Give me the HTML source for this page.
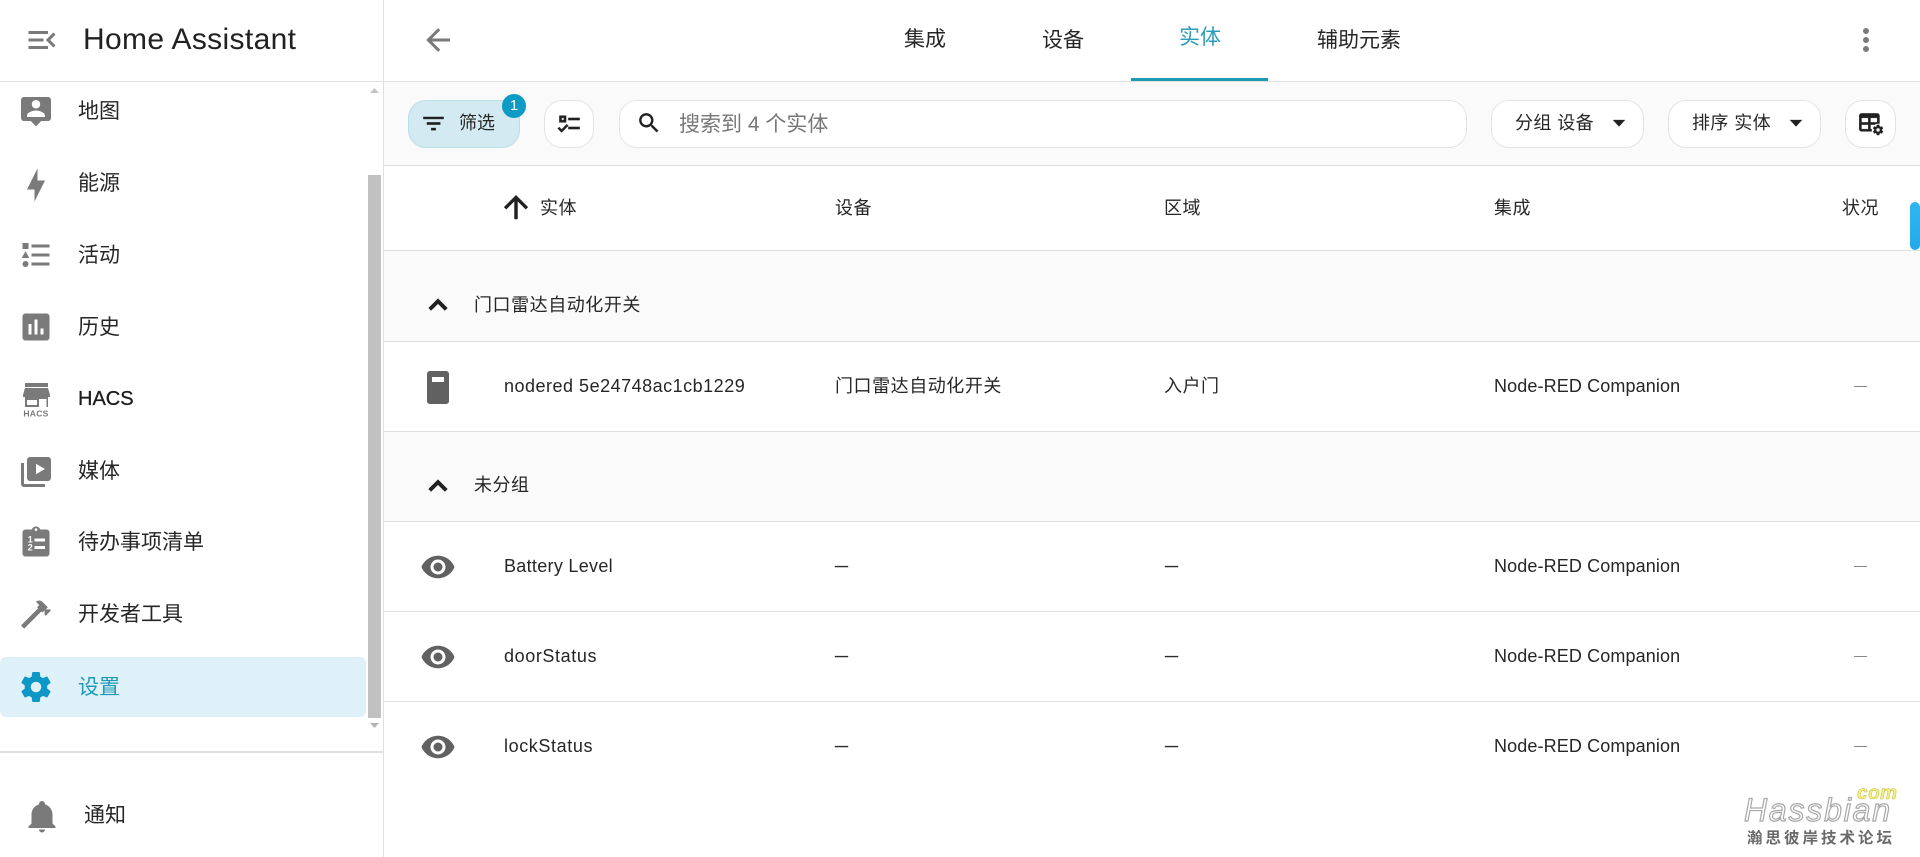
<!DOCTYPE html>
<html lang="zh"><head><meta charset="utf-8"><title>Home Assistant</title>
<style>
html,body{margin:0;padding:0;width:1920px;height:857px;overflow:hidden;background:#fff}
body{position:relative;font-family:"Liberation Sans","Noto Sans CJK SC",sans-serif;color:#262626}
.t,.l,.b,svg.i{position:absolute}
.t{white-space:nowrap;line-height:30px;height:30px}
.s{font-size:21px}
.c{font-size:18px;letter-spacing:.5px}
.n{letter-spacing:.12px}
.b{box-sizing:border-box;background:#fff;border:1px solid #e4e4e4;border-radius:18px;top:100px;height:48px}
.l{background:#e0e0e0}
svg.i{fill:#7a7a7a;overflow:visible}
svg.d{fill:#616161}
svg.k{fill:#212121;stroke:#212121;stroke-width:.3}
.e{font-size:13px;letter-spacing:0;-webkit-text-stroke:.4px #262626}
.g{font-size:13px;letter-spacing:0;color:#777}
</style></head><body>

<!-- main backgrounds -->
<div class="l" style="left:384px;top:82px;width:1536px;height:84px;background:#fafafa"></div>
<div class="l" style="left:384px;top:250px;width:1536px;height:91px;background:#fafafa"></div>
<div class="l" style="left:384px;top:431px;width:1536px;height:90px;background:#fafafa"></div>

<!-- lines -->
<div class="l" style="left:0;top:81px;width:1920px;height:1px"></div>
<div class="l" style="left:383px;top:0;width:1px;height:857px"></div>
<div class="l" style="left:384px;top:165px;width:1536px;height:1px"></div>
<div class="l" style="left:384px;top:250px;width:1536px;height:1px"></div>
<div class="l" style="left:384px;top:341px;width:1536px;height:1px"></div>
<div class="l" style="left:384px;top:431px;width:1536px;height:1px"></div>
<div class="l" style="left:384px;top:521px;width:1536px;height:1px"></div>
<div class="l" style="left:384px;top:611px;width:1536px;height:1px"></div>
<div class="l" style="left:384px;top:701px;width:1536px;height:1px"></div>
<div class="l" style="left:0;top:751px;width:383px;height:2px"></div>

<!-- sidebar header -->
<svg class="i" style="left:24px;top:22px" width="36" height="36" viewBox="0 0 24 24"><path d="M21,15.61L19.59,17L14.58,12L19.59,7L21,8.39L17.44,12L21,15.61M3,6H16V8H3V6M3,13V11H13V13H3M3,18V16H16V18H3Z"/></svg>
<div class="t" style="left:83px;top:25px;font-size:30px;letter-spacing:.35px;color:#212121">Home Assistant</div>

<!-- sidebar scrollbar -->
<div class="l" style="left:368px;top:175px;width:13px;height:543px;background:#c1c1c1"></div>
<svg class="i" style="left:370px;top:88px;fill:#c4c4c4" width="9" height="6" viewBox="0 0 9 6"><path d="M4.5 0L9 5H0Z"/></svg>
<svg class="i" style="left:370px;top:723px;fill:#b5b5b5" width="9" height="6" viewBox="0 0 9 6"><path d="M4.5 5L0 0H9Z"/></svg>

<!-- selected -->
<div class="l" style="left:0;top:657px;width:366px;height:60px;background:#dff1f8;border-radius:6px"></div>

<!-- sidebar items -->
<svg class="i" style="left:18px;top:94px" width="36" height="36" viewBox="0 0 24 24"><path fill-rule="evenodd" d="M20 2H4C2.9 2 2 2.9 2 4V16C2 17.1 2.9 18 4 18H8.5L12 21.5L15.5 18H20C21.1 18 22 17.1 22 16V4C22 2.9 21.1 2 20 2ZM12 4C13.6 4 14.8 5.2 14.8 6.8C14.8 8.4 13.6 9.6 12 9.6C10.4 9.6 9.2 8.4 9.2 6.8C9.2 5.2 10.4 4 12 4ZM18 15.3H6V14.3C6 12.3 10 11 12 11C14 11 18 12.3 18 14.3Z"/></svg>
<div class="t s" style="left:78px;top:97px">地图</div>

<svg class="i" style="left:18px;top:167px" width="36" height="36" viewBox="0 0 24 24"><path d="M11 15H6L13 1V9H18L11 23V15Z"/></svg>
<div class="t s" style="left:78px;top:169px">能源</div>

<svg class="i" style="left:18px;top:237px" width="36" height="36" viewBox="0 0 24 24"><path d="M5,9.5L7.5,14H2.5L5,9.5M3,4H7V8H3V4M5,20A2,2 0 0,0 7,18A2,2 0 0,0 5,16A2,2 0 0,0 3,18A2,2 0 0,0 5,20M9,5V7H21V5H9M9,19H21V17H9V19M9,13H21V11H9V13Z"/></svg>
<div class="t s" style="left:78px;top:241px">活动</div>

<svg class="i" style="left:18px;top:309px" width="36" height="36" viewBox="0 0 24 24"><path fill-rule="evenodd" d="M19 3H5C3.9 3 3 3.9 3 5V19C3 20.1 3.9 21 5 21H19C20.1 21 21 20.1 21 19V5C21 3.9 20.1 3 19 3ZM9 17H7V10H9V17ZM13 17H11V7H13V17ZM17 17H15V13H17V17Z"/></svg>
<div class="t s" style="left:78px;top:313px">历史</div>

<svg class="i" style="left:22px;top:382px" width="28" height="36" viewBox="0 0 28 36"><path d="M3 1H26V5H3ZM3 6H26L28 13V15H1V13Z" /><path fill-rule="evenodd" d="M3 15H26V25H24.5V17H17V25H3ZM5 18V23H15V18Z"/><text x="14" y="34.5" text-anchor="middle" font-family="Liberation Sans" font-size="8.5" font-weight="700" letter-spacing=".3">HACS</text></svg>
<div class="t" style="left:78px;top:384px;font-size:20px;color:#1c1c1c;-webkit-text-stroke:.3px #1c1c1c">HACS</div>

<svg class="i" style="left:18px;top:454px" width="36" height="36" viewBox="0 0 24 24"><path fill-rule="evenodd" d="M4,6H2V20A2,2 0 0,0 4,22H18V20H4V6ZM22,4V16A2,2 0 0,1 20,18H8A2,2 0 0,1 6,16V4A2,2 0 0,1 8,2H20A2,2 0 0,1 22,4ZM12,6.5V13.5L18,10Z"/></svg>
<div class="t s" style="left:78px;top:457px">媒体</div>

<svg class="i" style="left:18px;top:525px" width="36" height="36" viewBox="0 0 24 24"><path fill-rule="evenodd" d="M19 3H14.82C14.4 1.84 13.3 1 12 1S9.6 1.84 9.18 3H5C3.9 3 3 3.9 3 5V19C3 20.1 3.9 21 5 21H19C20.1 21 21 20.1 21 19V5C21 3.9 20.1 3 19 3ZM12 2.2A.9 .9 0 1 1 12 4A.9 .9 0 1 1 12 2.2ZM11 9H18V11H11ZM11 14H18V16H11Z"/><text x="8.2" y="11.6" text-anchor="middle" font-family="Liberation Sans" font-size="6" font-weight="700" fill="#fff">1</text><text x="8.2" y="17" text-anchor="middle" font-family="Liberation Sans" font-size="6" font-weight="700" fill="#fff">2</text></svg>
<div class="t s" style="left:78px;top:528px">待办事项清单</div>

<svg class="i" style="left:18px;top:596px" width="36" height="36" viewBox="0 0 24 24"><path d="M2 19.63L13.43 8.2L12.72 7.5L14.14 6.07L12 3.89C13.2 2.7 15.09 2.7 16.27 3.89L19.87 7.5L18.45 8.91H21.29L22 9.62L18.45 13.21L17.74 12.5V9.62L16.27 11.04L15.56 10.33L4.13 21.76L2 19.63Z"/></svg>
<div class="t s" style="left:78px;top:600px">开发者工具</div>

<svg class="i" style="left:18px;top:669px;fill:#0d97c6" width="36" height="36" viewBox="0 0 24 24"><path d="M12,15.5A3.5,3.5 0 0,1 8.5,12A3.5,3.5 0 0,1 12,8.5A3.5,3.5 0 0,1 15.5,12A3.5,3.5 0 0,1 12,15.5M19.43,12.97C19.47,12.65 19.5,12.33 19.5,12C19.5,11.67 19.47,11.34 19.43,11L21.54,9.37C21.73,9.22 21.78,8.95 21.66,8.73L19.66,5.27C19.54,5.05 19.27,4.96 19.05,5.05L16.56,6.05C16.04,5.66 15.5,5.32 14.87,5.07L14.5,2.42C14.46,2.18 14.25,2 14,2H10C9.75,2 9.54,2.18 9.5,2.42L9.13,5.07C8.5,5.32 7.96,5.66 7.44,6.05L4.95,5.05C4.73,4.96 4.46,5.05 4.34,5.27L2.34,8.73C2.21,8.95 2.27,9.22 2.46,9.37L4.57,11C4.53,11.34 4.5,11.67 4.5,12C4.5,12.33 4.53,12.65 4.57,12.97L2.46,14.63C2.27,14.78 2.21,15.05 2.34,15.27L4.34,18.73C4.46,18.95 4.73,19.03 4.95,18.95L7.44,17.94C7.96,18.34 8.5,18.68 9.13,18.93L9.5,21.58C9.54,21.82 9.75,22 10,22H14C14.25,22 14.46,21.82 14.5,21.58L14.87,18.93C15.5,18.67 16.04,18.34 16.56,17.94L19.05,18.95C19.27,19.03 19.54,18.95 19.66,18.73L21.66,15.27C21.78,15.05 21.73,14.78 21.54,14.63L19.43,12.97Z"/></svg>
<div class="t s" style="left:78px;top:673px;color:#1e9ab8">设置</div>

<svg class="i" style="left:24px;top:798px" width="36" height="36" viewBox="0 0 24 24"><path d="M21,19V20H3V19L5,17V11C5,7.9 7.03,5.17 10,4.29C10,4.19 10,4.1 10,4A2,2 0 0,1 12,2A2,2 0 0,1 14,4C14,4.1 14,4.19 14,4.29C16.97,5.17 19,7.9 19,11V17L21,19M14,21A2,2 0 0,1 12,23A2,2 0 0,1 10,21"/></svg>
<div class="t s" style="left:84px;top:801px">通知</div>

<!-- top bar -->
<svg class="i" style="left:420px;top:22px" width="36" height="36" viewBox="0 0 24 24"><path d="M20,11V13H8L13.5,18.5L12.08,19.92L4.16,12L12.08,4.08L13.5,5.5L8,11H20Z"/></svg>
<div class="t s" style="left:904px;top:25px">集成</div>
<div class="t s" style="left:1042px;top:26px">设备</div>
<div class="t s" style="left:1179px;top:23px;color:#2a9db8">实体</div>
<div class="t s" style="left:1317px;top:26px">辅助元素</div>
<div class="l" style="left:1131px;top:78px;width:137px;height:3px;background:#1e9ab5"></div>
<svg class="i" style="left:1848px;top:22px" width="36" height="36" viewBox="0 0 24 24"><path d="M12,16A2,2 0 0,1 14,18A2,2 0 0,1 12,20A2,2 0 0,1 10,18A2,2 0 0,1 12,16M12,10A2,2 0 0,1 14,12A2,2 0 0,1 12,14A2,2 0 0,1 10,12A2,2 0 0,1 12,10M12,4A2,2 0 0,1 14,6A2,2 0 0,1 12,8A2,2 0 0,1 10,6A2,2 0 0,1 12,4Z"/></svg>

<!-- toolbar -->
<div class="b" style="left:408px;width:112px;background:#d3eaf2;border-color:#bcdde8"></div>
<svg class="i k" style="left:420px;top:109.5px" width="27" height="27" viewBox="0 0 24 24"><path d="M6,13H18V11H6M3,6V8H21V6M10,18H14V16H10V18Z"/></svg>
<div class="t" style="left:459px;top:108px;font-size:18px">筛选</div>
<div class="l" style="left:502px;top:94px;width:24px;height:24px;border-radius:50%;background:#0d9bc6;color:#fff;font-size:15px;line-height:24px;text-align:center">1</div>

<div class="b" style="left:544px;width:50px"></div>
<svg class="i k" style="left:555.5px;top:109.5px" width="27" height="27" viewBox="0 0 24 24"><path d="M3,5H9V11H3V5M5,7V9H7V7H5M11,7H21V9H11V7M11,15H21V17H11V15M5,20L1.5,16.5L2.91,15.09L5,17.17L9.59,12.59L11,14L5,20Z"/></svg>

<div class="b" style="left:619px;width:848px"></div>
<svg class="i k" style="left:636px;top:110px" width="26" height="26" viewBox="0 0 24 24"><path d="M9.5,3A6.5,6.5 0 0,1 16,9.5C16,11.11 15.41,12.59 14.44,13.73L14.71,14H15.5L20.5,19L19,20.5L14,15.5V14.71L13.73,14.44C12.59,15.41 11.11,16 9.5,16A6.5,6.5 0 0,1 3,9.5A6.5,6.5 0 0,1 9.5,3M9.5,5C7,5 5,7 5,9.5C5,12 7,14 9.5,14C12,14 14,12 14,9.5C14,7 12,5 9.5,5Z"/></svg>
<div class="t" style="left:679px;top:110px;font-size:21px;color:#777">搜索到 4 个实体</div>

<div class="b" style="left:1491px;width:153px"></div>
<div class="t" style="left:1515px;top:108px;font-size:18px;letter-spacing:.4px">分组 设备</div>
<svg class="i k" style="left:1613px;top:120px" width="12" height="7" viewBox="0 0 12 7"><path d="M0 0H12L6 6.5Z"/></svg>

<div class="b" style="left:1668px;width:153px"></div>
<div class="t" style="left:1692px;top:108px;font-size:18px;letter-spacing:.4px">排序 实体</div>
<svg class="i k" style="left:1790px;top:120px" width="12" height="7" viewBox="0 0 12 7"><path d="M0 0H12L6 6.5Z"/></svg>

<div class="b" style="left:1845px;width:51px"></div>
<svg class="i k" style="left:1856.5px;top:109.5px" width="27" height="27" viewBox="0 0 24 24"><path fill-rule="evenodd" d="M4 3H18C19.1 3 20 3.9 20 5V12.08C18.45 11.82 16.92 12.18 15.68 13H12V17H13.08C12.97 17.68 12.97 18.35 13.08 19H4C2.9 19 2 18.1 2 17V5C2 3.9 2.9 3 4 3ZM4 7V11H10V7H4ZM12 7V11H18V7H12ZM4 13V17H10V13H4Z"/><path transform="translate(13.2,12.2) scale(.46)" d="M12,15.5A3.5,3.5 0 0,1 8.5,12A3.5,3.5 0 0,1 12,8.5A3.5,3.5 0 0,1 15.5,12A3.5,3.5 0 0,1 12,15.5M19.43,12.97C19.47,12.65 19.5,12.33 19.5,12C19.5,11.67 19.47,11.34 19.43,11L21.54,9.37C21.73,9.22 21.78,8.95 21.66,8.73L19.66,5.27C19.54,5.05 19.27,4.96 19.05,5.05L16.56,6.05C16.04,5.66 15.5,5.32 14.87,5.07L14.5,2.42C14.46,2.18 14.25,2 14,2H10C9.75,2 9.54,2.18 9.5,2.42L9.13,5.07C8.5,5.32 7.96,5.66 7.44,6.05L4.95,5.05C4.73,4.96 4.46,5.05 4.34,5.27L2.34,8.73C2.21,8.95 2.27,9.22 2.46,9.37L4.57,11C4.53,11.34 4.5,11.67 4.5,12C4.5,12.33 4.53,12.65 4.57,12.97L2.46,14.63C2.27,14.78 2.21,15.05 2.34,15.27L4.34,18.73C4.46,18.95 4.73,19.03 4.95,18.95L7.44,17.94C7.96,18.34 8.5,18.68 9.13,18.93L9.5,21.58C9.54,21.82 9.75,22 10,22H14C14.25,22 14.46,21.82 14.5,21.58L14.87,18.93C15.5,18.67 16.04,18.34 16.56,17.94L19.05,18.95C19.27,19.03 19.54,18.95 19.66,18.73L21.66,15.27C21.78,15.05 21.73,14.78 21.54,14.63L19.43,12.97Z"/></svg>

<!-- table head -->
<svg class="i k" style="left:498px;top:189px" width="36" height="36" viewBox="0 0 24 24"><path d="M13,20H11V8L5.5,13.5L4.08,12.08L12,4.16L19.92,12.08L18.5,13.5L13,8V20Z"/></svg>
<div class="t c" style="left:540px;top:193px">实体</div>
<div class="t c" style="left:835px;top:193px">设备</div>
<div class="t c" style="left:1164px;top:193px">区域</div>
<div class="t c" style="left:1494px;top:193px">集成</div>
<div class="t c" style="left:1842px;top:193px">状况</div>
<div class="l" style="left:1910px;top:202px;width:10px;height:48px;border-radius:5px;background:linear-gradient(#2fb6f2,#22a9ea)"></div>

<!-- group 1 -->
<svg class="i k" style="left:420px;top:287px;stroke-width:.6" width="36" height="36" viewBox="0 0 24 24"><path d="M7.41,15.41L12,10.83L16.59,15.41L18,14L12,8L6,14L7.41,15.41Z"/></svg>
<div class="t c" style="left:474px;top:290px;letter-spacing:.55px">门口雷达自动化开关</div>

<!-- row 1 -->
<svg class="i d" style="left:427px;top:371px" width="22" height="34" viewBox="0 0 22 34"><path fill-rule="evenodd" d="M3 0H19C20.7 0 22 1.3 22 3V30C22 31.7 20.7 33 19 33H3C1.3 33 0 31.7 0 30V3C0 1.3 1.3 0 3 0ZM5 6V11H17V6Z"/></svg>
<div class="t c" style="left:504px;top:371px">nodered 5e24748ac1cb1229</div>
<div class="t c" style="left:835px;top:371px;letter-spacing:.55px">门口雷达自动化开关</div>
<div class="t c" style="left:1164px;top:371px">入户门</div>
<div class="t c n" style="left:1494px;top:371px">Node-RED Companion</div>
<div class="t g" style="left:1854px;top:371px">—</div>

<!-- group 2 -->
<svg class="i k" style="left:420px;top:468px;stroke-width:.6" width="36" height="36" viewBox="0 0 24 24"><path d="M7.41,15.41L12,10.83L16.59,15.41L18,14L12,8L6,14L7.41,15.41Z"/></svg>
<div class="t c" style="left:474px;top:470px">未分组</div>

<!-- row 2 -->
<svg class="i d" style="left:420px;top:549px" width="36" height="36" viewBox="0 0 24 24"><path d="M12,9A3,3 0 0,0 9,12A3,3 0 0,0 12,15A3,3 0 0,0 15,12A3,3 0 0,0 12,9M12,17A5,5 0 0,1 7,12A5,5 0 0,1 12,7A5,5 0 0,1 17,12A5,5 0 0,1 12,17M12,4.5C7,4.5 2.73,7.61 1,12C2.73,16.39 7,19.5 12,19.5C17,19.5 21.27,16.39 23,12C21.27,7.61 17,4.5 12,4.5Z"/></svg>
<div class="t c" style="left:504px;top:551px;letter-spacing:.3px">Battery Level</div>
<div class="t e" style="left:835px;top:551px">—</div>
<div class="t e" style="left:1165px;top:551px">—</div>
<div class="t c n" style="left:1494px;top:551px">Node-RED Companion</div>
<div class="t g" style="left:1854px;top:551px">—</div>

<!-- row 3 -->
<svg class="i d" style="left:420px;top:639px" width="36" height="36" viewBox="0 0 24 24"><path d="M12,9A3,3 0 0,0 9,12A3,3 0 0,0 12,15A3,3 0 0,0 15,12A3,3 0 0,0 12,9M12,17A5,5 0 0,1 7,12A5,5 0 0,1 12,7A5,5 0 0,1 17,12A5,5 0 0,1 12,17M12,4.5C7,4.5 2.73,7.61 1,12C2.73,16.39 7,19.5 12,19.5C17,19.5 21.27,16.39 23,12C21.27,7.61 17,4.5 12,4.5Z"/></svg>
<div class="t c" style="left:504px;top:641px;letter-spacing:.6px">doorStatus</div>
<div class="t e" style="left:835px;top:641px">—</div>
<div class="t e" style="left:1165px;top:641px">—</div>
<div class="t c n" style="left:1494px;top:641px">Node-RED Companion</div>
<div class="t g" style="left:1854px;top:641px">—</div>

<!-- row 4 -->
<svg class="i d" style="left:420px;top:729px" width="36" height="36" viewBox="0 0 24 24"><path d="M12,9A3,3 0 0,0 9,12A3,3 0 0,0 12,15A3,3 0 0,0 15,12A3,3 0 0,0 12,9M12,17A5,5 0 0,1 7,12A5,5 0 0,1 12,7A5,5 0 0,1 17,12A5,5 0 0,1 12,17M12,4.5C7,4.5 2.73,7.61 1,12C2.73,16.39 7,19.5 12,19.5C17,19.5 21.27,16.39 23,12C21.27,7.61 17,4.5 12,4.5Z"/></svg>
<div class="t c" style="left:504px;top:731px;letter-spacing:.6px">lockStatus</div>
<div class="t e" style="left:835px;top:731px">—</div>
<div class="t e" style="left:1165px;top:731px">—</div>
<div class="t c n" style="left:1494px;top:731px">Node-RED Companion</div>
<div class="t g" style="left:1854px;top:731px">—</div>

<!-- watermark -->
<div class="t" style="left:1744px;top:795px;font-size:32px;font-style:italic;letter-spacing:1.8px;color:#fff;-webkit-text-stroke:1.2px #a8a8a8">Hassbian</div>
<div class="t" style="left:1857px;top:779px;font-size:19px;font-style:italic;font-weight:700;letter-spacing:.5px;color:#f4f07c;-webkit-text-stroke:.6px #c9c45a">com</div>
<div class="t" style="left:1747px;top:824px;font-size:15.5px;font-weight:700;letter-spacing:3px;color:#6a6a6a">瀚思彼岸技术论坛</div>

</body></html>
